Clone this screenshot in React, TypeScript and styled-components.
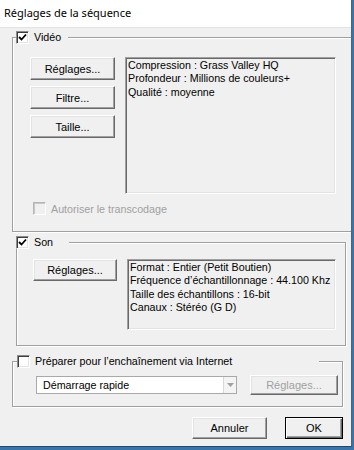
import styled, { createGlobalStyle } from 'styled-components';

const GlobalStyle = createGlobalStyle`
  html, body {
    margin: 0;
    padding: 0;
  }
  body {
    background: #3b74a9;
    font-family: 'Liberation Sans', Arial, sans-serif;
  }
`;

const Desktop = styled.div`
  width: 354px;
  height: 450px;
  background: #3b74a9;
  overflow: hidden;
`;

const Window = styled.div`
  box-sizing: border-box;
  width: 352px;
  height: 447px;
  background: #f0f0f0;
  border-right: 1px solid #4d6377;
  border-bottom: 1px solid #23476d;
  display: flex;
  flex-direction: column;
  overflow: hidden;
  font-size: 10.7px;
  color: #000;
`;

const TitleBar = styled.div`
  box-sizing: border-box;
  height: 28px;
  flex-shrink: 0;
  background: #fff;
  border-bottom: 1px solid #e3e3e3;
  display: flex;
  align-items: center;
  padding-left: 4px;
  padding-bottom: 2px;
  font-family: 'Noto Sans', 'Open Sans', sans-serif;
  font-size: 11px;
  color: #000;
`;

const Body = styled.div`
  display: flex;
  flex-direction: column;
  align-items: flex-start;
`;

const Group = styled.fieldset<{ $left: number; $top: number; $width: number }>`
  box-sizing: border-box;
  margin: ${(p) => p.$top}px 0 0 ${(p) => p.$left}px;
  width: ${(p) => p.$width}px;
  padding: 0;
  min-width: 0;
  border: 1px solid #a0a0a0;
  box-shadow: inset 1px 1px 0 #fff, 1px 1px 0 #fff;
`;

const Legend = styled.legend<{ $offset: number; $width: number }>`
  box-sizing: border-box;
  margin-left: ${(p) => p.$offset}px;
  width: ${(p) => p.$width}px;
  padding: 0;
  height: 13px;
  background: #f0f0f0;
`;

const LegendRow = styled.span`
  display: flex;
  align-items: center;
  gap: 5px;
  height: 13px;
  line-height: 13px;
`;

const Box = styled.span<{ $disabled?: boolean }>`
  box-sizing: border-box;
  width: 13px;
  height: 13px;
  flex-shrink: 0;
  display: inline-flex;
  align-items: center;
  justify-content: center;
  background: ${(p) => (p.$disabled ? '#f0f0f0' : '#fff')};
  border: 1px solid;
  border-color: ${(p) => (p.$disabled ? '#b5b5b5 #fff #fff #b5b5b5' : '#8c8c8c #fff #fff #8c8c8c')};
  box-shadow: ${(p) =>
    p.$disabled ? 'inset 1px 1px 0 #c8c8c8' : 'inset 1px 1px 0 #3c3c3c, inset -1px -1px 0 #e3e3e3'};
`;

const Label = styled.span<{ $disabled?: boolean }>`
  color: ${(p) => (p.$disabled ? '#a0a0a0' : '#000')};
  white-space: nowrap;
`;

const Content = styled.div<{ $pad: string }>`
  padding: ${(p) => p.$pad};
  display: flex;
  flex-direction: column;
`;

const Row = styled.div<{ $gap: number; $center?: boolean }>`
  display: flex;
  gap: ${(p) => p.$gap}px;
  align-items: ${(p) => (p.$center ? 'center' : 'flex-start')};
`;

const ButtonColumn = styled.div`
  display: flex;
  flex-direction: column;
  gap: 6px;
`;

const Button = styled.button<{ $w: number; $h: number; $primary?: boolean }>`
  box-sizing: border-box;
  width: ${(p) => p.$w}px;
  height: ${(p) => p.$h}px;
  padding: 0;
  margin: 0;
  font-family: 'Liberation Sans', Arial, sans-serif;
  font-size: 11px;
  color: #000;
  background: #f0f0f0;
  border: 1px solid;
  border-color: ${(p) => (p.$primary ? '#000' : '#fff #696969 #696969 #fff')};
  box-shadow: ${(p) =>
    p.$primary
      ? 'inset 1px 1px 0 #fff, inset -1px -1px 0 #696969, inset -2px -2px 0 #a0a0a0'
      : 'inset -1px -1px 0 #a0a0a0, inset 1px 1px 0 #e3e3e3'};
  cursor: default;

  &:disabled {
    color: #a0a0a0;
  }
`;

const InfoBox = styled.div<{ $w: number; $h: number }>`
  box-sizing: border-box;
  width: ${(p) => p.$w}px;
  height: ${(p) => p.$h}px;
  background: #f0f0f0;
  border: 1px solid;
  border-color: #a0a0a0 #fff #fff #a0a0a0;
  box-shadow: inset 1px 1px 0 #696969, inset -1px -1px 0 #e3e3e3;
  padding: 1px 0 0 2px;
  line-height: 13.3px;
  white-space: nowrap;
  overflow: hidden;
`;

const CheckRow = styled.div`
  display: flex;
  align-items: center;
  gap: 5px;
  margin: 8px 0 0 3px;
  height: 13px;
`;

const Combo = styled.div`
  box-sizing: border-box;
  width: 201px;
  height: 18px;
  background: #fff;
  border: 1px solid #a9a9a9;
  display: flex;
  align-items: center;
`;

const ComboText = styled.span`
  flex: 1;
  padding-left: 6px;
`;

const ComboArrow = styled.span`
  box-sizing: border-box;
  width: 13px;
  height: 16px;
  background: #f4f4f4;
  border-left: 1px solid #d9d9d9;
  display: flex;
  align-items: center;
  justify-content: center;
`;

const Footer = styled.div`
  align-self: stretch;
  display: flex;
  justify-content: flex-end;
  gap: 18px;
  margin-top: 10px;
  padding-right: 8px;
`;

function Check({ checked, disabled }: { checked?: boolean; disabled?: boolean }) {
  return (
    <Box $disabled={disabled}>
      {checked && (
        <svg width="9" height="9" viewBox="0 0 9 9">
          <path d="M1 4 L3.5 6.5 L8 1.5" fill="none" stroke="#000" strokeWidth="1.8" />
        </svg>
      )}
    </Box>
  );
}

export default function App(): JSX.Element {
  return (
    <Desktop>
      <GlobalStyle />
      <Window>
        <TitleBar>Réglages de la séquence</TitleBar>
        <Body>
          <Group $left={12} $top={3} $width={341}>
            <Legend $offset={3} $width={52}>
              <LegendRow>
                <Check checked />
                <Label>Vidéo</Label>
              </LegendRow>
            </Legend>
            <Content $pad="13px 0 16px 17px">
              <Row $gap={10}>
                <ButtonColumn>
                  <Button $w={85} $h={23}>Réglages...</Button>
                  <Button $w={85} $h={23}>Filtre...</Button>
                  <Button $w={85} $h={23}>Taille...</Button>
                </ButtonColumn>
                <InfoBox $w={211} $h={137}>
                  Compression : Grass Valley HQ
                  <br />
                  Profondeur : Millions de couleurs+
                  <br />
                  Qualité : moyenne
                </InfoBox>
              </Row>
              <CheckRow>
                <Check disabled />
                <Label $disabled>Autoriser le transcodage</Label>
              </CheckRow>
            </Content>
          </Group>

          <Group $left={16} $top={4} $width={330}>
            <Legend $offset={-1} $width={53}>
              <LegendRow>
                <Check checked />
                <Label>Son</Label>
              </LegendRow>
            </Legend>
            <Content $pad="10px 0 15px 16px">
              <Row $gap={10}>
                <Button $w={84} $h={22}>Réglages...</Button>
                <InfoBox $w={209} $h={71}>
                  Format : Entier (Petit Boutien)
                  <br />
                  Fréquence d’échantillonnage : 44.100 Khz
                  <br />
                  Taille des échantillons : 16-bit
                  <br />
                  Canaux : Stéréo (G D)
                </InfoBox>
              </Row>
            </Content>
          </Group>

          <Group $left={12} $top={9} $width={331}>
            <Legend $offset={4} $width={302}>
              <LegendRow>
                <Check />
                <Label>Préparer pour l’enchaînement via Internet</Label>
              </LegendRow>
            </Legend>
            <Content $pad="7px 0 11px 23px">
              <Row $gap={13} $center>
                <Combo>
                  <ComboText>Démarrage rapide</ComboText>
                  <ComboArrow>
                    <svg width="7" height="4" viewBox="0 0 7 4">
                      <path d="M0 0 H7 L3.5 4 Z" fill="#a0a0a0" />
                    </svg>
                  </ComboArrow>
                </Combo>
                <Button $w={88} $h={20} disabled>
                  Réglages...
                </Button>
              </Row>
            </Content>
          </Group>

          <Footer>
            <Button $w={75} $h={22}>Annuler</Button>
            <Button $w={58} $h={22} $primary>OK</Button>
          </Footer>
        </Body>
      </Window>
    </Desktop>
  );
}
